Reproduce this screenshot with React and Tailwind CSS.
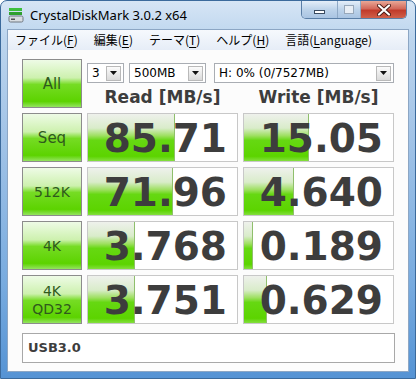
const rows = [
  { label: ['Seq'], read: '85.71', write: '15.05', rw: 87, ww: 65 },
  { label: ['512K'], read: '71.96', write: '4.640', rw: 85, ww: 50 },
  { label: ['4K'], read: '3.768', write: '0.189', rw: 47, ww: 9 },
  { label: ['4K', 'QD32'], read: '3.751', write: '0.629', rw: 47, ww: 23 },
];

function GreenButton({ children, comic }) {
  return (
    <div
      className={`flex h-[49px] w-[60px] shrink-0 flex-col items-center justify-center border border-[#8c8c8c] bg-[linear-gradient(to_bottom,#eefbe6_0%,#cdf1ae_38%,#76dc24_52%,#5cd300_88%,#94e460_100%)] font-['DejaVu_Sans'] leading-[18px] text-[#2f5a1c] ${comic ? 'text-[15px]' : 'text-[14px]'}`}
    >
      {children}
    </div>
  );
}

function ValueBox({ value, fill }) {
  return (
    <div className="relative flex h-[49px] w-[151px] shrink-0 items-center justify-end overflow-hidden border border-[#c8c8c8] bg-white pr-[10px]">
      <div
        className="absolute inset-y-0 left-0 border-r border-[#8fbf6c] bg-[linear-gradient(to_bottom,#eef1ec_0%,#d9ecca_30%,#9fe062_46%,#66d812_56%,#5cd400_90%,#84df3e_100%)]"
        style={{ width: fill }}
      />
      <span className="relative pt-[2px] font-['DejaVu_Sans'] text-[39px] font-bold leading-none text-[#3d3d3d]">
        {value}
      </span>
    </div>
  );
}

function Combo({ text, className }) {
  return (
    <div className={`flex h-[20px] items-center justify-between border border-[#a9adb3] bg-white pl-[4px] pr-[2px] ${className}`}>
      <span className="font-['DejaVu_Sans'] text-[12px] leading-none text-black">{text}</span>
      <div className="flex h-[15px] w-[15px] items-center justify-center border border-[#b9b9b9] bg-[linear-gradient(to_bottom,#fbfbfb,#dadada)]">
        <svg width="7" height="4" viewBox="0 0 7 4">
          <path d="M0 0h7L3.5 4z" fill="#111" />
        </svg>
      </div>
    </div>
  );
}

function MenuItem({ pre, key2, post }) {
  return (
    <span>
      {pre}(<span className="underline underline-offset-2">{key2}</span>{post})
    </span>
  );
}

export default function App() {
  return (
    <div className="flex h-[379px] w-[416px] flex-col overflow-hidden rounded-t-[7px] border border-[#3b6a9c] bg-[linear-gradient(to_bottom,#d6e5f5_0%,#bcd5ee_10%,#a3c4e7_35%,#78abdf_75%,#5593d4_100%)]">
      {/* title bar */}
      <div className="flex h-[28px] shrink-0 items-start justify-between">
        <div className="flex items-center gap-[6px] pl-[7px] pt-[6px]">
          <svg width="16" height="16" viewBox="0 0 16 16">
            <rect x="1" y="1" width="13" height="3" fill="#3cbf3c" />
            <rect x="1" y="5" width="13" height="3" fill="#2fa02f" />
            <rect x="1" y="9" width="14" height="6" rx="1.5" fill="#d8dde2" stroke="#6f7780" />
            <rect x="3" y="11.5" width="4" height="1.5" fill="#555" />
          </svg>
          <span className="font-['Noto_Sans'] text-[13px] leading-none text-black">CrystalDiskMark 3.0.2 x64</span>
        </div>
        <div className="mr-[8px] flex h-[18px] overflow-hidden rounded-b-[5px] border border-t-0 border-[#5a7ea6]">
          <div className="flex w-[36px] items-center justify-center border-r border-[#8fa9c6] bg-[linear-gradient(to_bottom,#e4eef9,#bdd3ea_50%,#a9c4e2)]">
            <div className="mt-[5px] h-[4px] w-[11px] border border-[#3a4b60] bg-white" />
          </div>
          <div className="flex w-[23px] items-center justify-center border-r border-[#8fa9c6] bg-[linear-gradient(to_bottom,#e4eef9,#bdd3ea_50%,#a9c4e2)]">
            <div className="h-[9px] w-[10px] border border-[#98a8ba] bg-[#e8eef5]" />
          </div>
          <div className="flex w-[45px] items-center justify-center bg-[linear-gradient(to_bottom,#e9a897,#d2685a_45%,#c13b2b_55%,#d0604a)]">
            <svg width="14" height="12" viewBox="0 0 14 12">
              <path d="M2 1.5L12 10.5M12 1.5L2 10.5" stroke="#4a1a14" strokeWidth="4" strokeLinecap="round" />
              <path d="M2 1.5L12 10.5M12 1.5L2 10.5" stroke="#ffffff" strokeWidth="2.2" strokeLinecap="round" />
            </svg>
          </div>
        </div>
      </div>

      {/* window body */}
      <div className="mx-[6px] mb-[6px] flex flex-1 flex-col border border-[#8ca6c4] bg-white">
        {/* menu */}
        <div className="flex h-[20px] shrink-0 items-center gap-[16px] bg-[linear-gradient(to_bottom,#f6f9fd,#e6edf7)] pl-[7px] font-['Noto_Sans_CJK_JP',sans-serif] text-[12px] leading-none text-black">
          <MenuItem pre="ファイル" key2="F" />
          <MenuItem pre="編集" key2="E" />
          <MenuItem pre="テーマ" key2="T" />
          <MenuItem pre="ヘルプ" key2="H" />
          <span>
            言語(<span className="underline underline-offset-2">L</span>anguage)
          </span>
        </div>

        {/* client */}
        <div className="flex flex-1 flex-col gap-[5px] bg-[#fcfcfc] pl-[14px] pt-[9px]">
          <div className="flex gap-[5px]">
            <GreenButton comic>All</GreenButton>
            <div className="flex w-[307px] flex-col">
              <div className="mt-[4px] flex">
                <Combo text="3" className="w-[37px]" />
                <Combo text="500MB" className="ml-[5px] w-[77px]" />
                <Combo text="H: 0% (0/7527MB)" className="ml-[8px] w-[180px]" />
              </div>
              <div className="mt-[3px] flex h-[22px] items-center gap-[5px] font-['DejaVu_Sans'] text-[17px] font-bold leading-none text-[#3d3d3d]">
                <span className="w-[151px] text-center">Read [MB/s]</span>
                <span className="w-[151px] text-center">Write [MB/s]</span>
              </div>
            </div>
          </div>

          {rows.map((r) => (
            <div key={r.read} className="flex gap-[5px]">
              <GreenButton comic={r.label[0] === 'Seq'}>
                {r.label.map((l) => (
                  <span key={l}>{l}</span>
                ))}
              </GreenButton>
              <ValueBox value={r.read} fill={r.rw} />
              <ValueBox value={r.write} fill={r.ww} />
            </div>
          ))}

          <div className="mt-[4px] flex h-[30px] w-[373px] items-center border border-[#a8a8a8] bg-white pl-[5px] font-['DejaVu_Sans'] text-[13px] font-bold text-[#3d3d3d]">
            USB3.0
          </div>
        </div>
      </div>
    </div>
  );
}
